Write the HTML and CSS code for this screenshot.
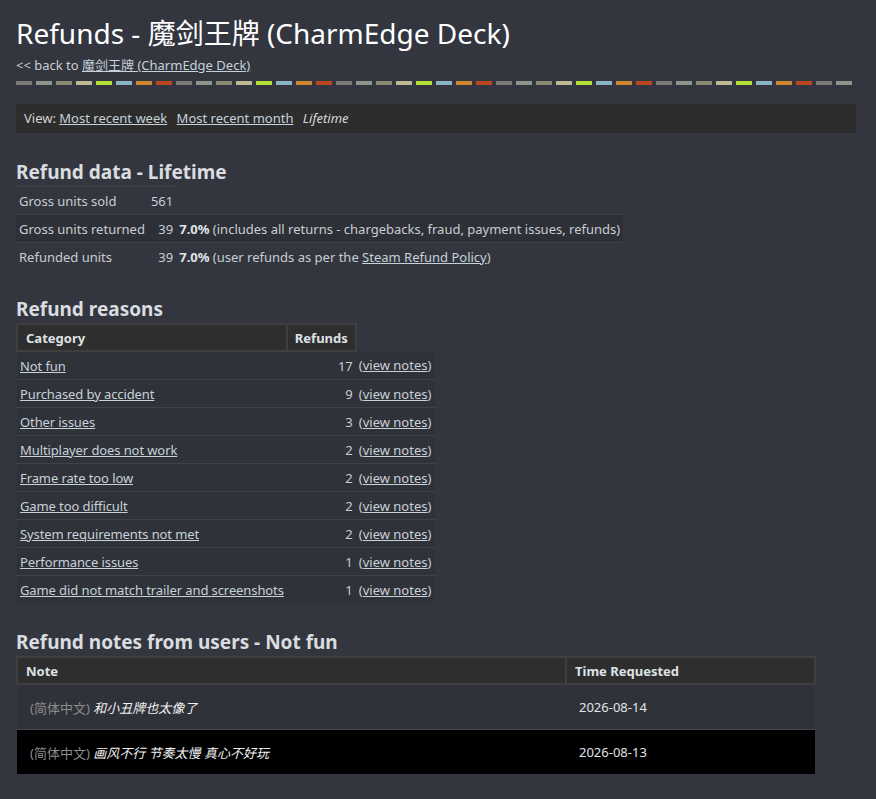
FILE: index.html
```html
<!DOCTYPE html>
<html lang="en">
<head>
    <meta charset="UTF-8">
    <title>Refunds - 魔剑王牌 (CharmEdge Deck)</title>
    <link rel="stylesheet" href="styles.css">
</head>
<body>
    <h1 class="page-title">Refunds - 魔剑王牌 (CharmEdge Deck)</h1>
    <div class="back-link">&lt;&lt; back to <a href="#">魔剑王牌 (CharmEdge Deck)</a></div>
    <div class="dash-rule"></div>

    <div class="view-bar">
        View: <a href="#">Most recent week</a>
        <a href="#">Most recent month</a>
        <em>Lifetime</em>
    </div>

    <h2>Refund data - Lifetime</h2>
    <table class="refund-data">
        <tr>
            <td>Gross units sold</td>
            <td class="num">561</td>
        </tr>
        <tr>
            <td>Gross units returned</td>
            <td class="num">39</td>
            <td><b>7.0%</b> (includes all returns - chargebacks, fraud, payment issues, refunds)</td>
        </tr>
        <tr>
            <td>Refunded units</td>
            <td class="num">39</td>
            <td><b>7.0%</b> (user refunds as per the <a href="#">Steam Refund Policy</a>)</td>
        </tr>
    </table>

    <h2>Refund reasons</h2>
    <table class="reasons">
        <thead>
            <tr>
                <th class="cat-col">Category</th>
                <th>Refunds</th>
            </tr>
        </thead>
        <tbody>
            <tr><td><a href="#">Not fun</a></td><td class="num">17</td><td>(<a href="#">view notes</a>)</td></tr>
            <tr><td><a href="#">Purchased by accident</a></td><td class="num">9</td><td>(<a href="#">view notes</a>)</td></tr>
            <tr><td><a href="#">Other issues</a></td><td class="num">3</td><td>(<a href="#">view notes</a>)</td></tr>
            <tr><td><a href="#">Multiplayer does not work</a></td><td class="num">2</td><td>(<a href="#">view notes</a>)</td></tr>
            <tr><td><a href="#">Frame rate too low</a></td><td class="num">2</td><td>(<a href="#">view notes</a>)</td></tr>
            <tr><td><a href="#">Game too difficult</a></td><td class="num">2</td><td>(<a href="#">view notes</a>)</td></tr>
            <tr><td><a href="#">System requirements not met</a></td><td class="num">2</td><td>(<a href="#">view notes</a>)</td></tr>
            <tr><td><a href="#">Performance issues</a></td><td class="num">1</td><td>(<a href="#">view notes</a>)</td></tr>
            <tr><td><a href="#">Game did not match trailer and screenshots</a></td><td class="num">1</td><td>(<a href="#">view notes</a>)</td></tr>
        </tbody>
    </table>

    <h2>Refund notes from users - Not fun</h2>
    <table class="notes">
        <thead>
            <tr>
                <th class="note-col">Note</th>
                <th>Time Requested</th>
            </tr>
        </thead>
        <tbody>
            <tr>
                <td><span class="lang">(简体中文)</span> <i>和小丑牌也太像了</i></td>
                <td>2026-08-14</td>
            </tr>
            <tr class="dark">
                <td><span class="lang">(简体中文)</span> <i>画风不行 节奏太慢 真心不好玩</i></td>
                <td>2026-08-13</td>
            </tr>
        </tbody>
    </table>
</body>
</html>
```

FILE: styles.css
```css
body {
    margin: 0;
    padding: 14px 20px 20px 16px;
    background-color: #33363f;
    color: #c9cdd1;
    font-family: "Noto Sans", "Noto Sans CJK SC", sans-serif;
    font-size: 13px;
}
a {
    color: #c6d1d9;
    text-decoration: underline;
}
.page-title {
    margin: 0;
    font-size: 28px;
    font-weight: normal;
    line-height: 38px;
    color: #ffffff;
}
.back-link {
    margin-top: 3px;
    line-height: 20px;
}
/* 8-colour dashed strip under the header */
.dash-rule {
    width: 836px;
    height: 4px;
    margin-top: 6px;
    background: repeating-linear-gradient(90deg,
        #7b7b7b 0 16px, transparent 16px 20px,
        #8c978c 20px 36px, transparent 36px 40px,
        #8c8a6e 40px 56px, transparent 56px 60px,
        #bcb898 60px 76px, transparent 76px 80px,
        #b5e03a 80px 96px, transparent 96px 100px,
        #8ab4c4 100px 116px, transparent 116px 120px,
        #c8882e 120px 136px, transparent 136px 140px,
        #b8461e 140px 156px, transparent 156px 160px);
}
.view-bar {
    margin-top: 19px;
    padding: 0 8px;
    height: 29px;
    line-height: 29px;
    background-color: #2d2d2e;
    color: #d4d4d4;
}
.view-bar a {
    margin-right: 6px;
}
.view-bar em {
    color: #d8d8d8;
}
h2 {
    margin: 26px 0 1px;
    font-size: 19px;
    line-height: 26px;
    font-weight: bold;
    color: #dadde0;
}
table {
    border-collapse: collapse;
}
td {
    padding: 0 3px;
    height: 27px;
    border-top: 1px solid #3f4249;
    white-space: nowrap;
}
.num {
    text-align: right;
}
b {
    color: #e0e3e6;
}
.refund-data tr:nth-child(2) td {
    background-color: #2d3037;
}
th {
    text-align: left;
    font-weight: bold;
    height: 25px;
    padding: 0 8px;
    background-color: #2e2e2f;
    border: 2px solid #3e3f41;
    color: #dfe2e5;
}
.cat-col {
    width: 249px;
}
.reasons th:last-child {
    padding: 0 7px;
}
.reasons td {
    background-color: #30323a;
}
.reasons tbody tr:first-child td {
    border-top: none;
}
.reasons td:first-child {
    letter-spacing: -0.1px;
}
.reasons td:last-child {
    padding-right: 4px;
}
.note-col {
    width: 531px;
}
.notes th:last-child {
    width: 231px;
}
.notes td {
    height: 44px;
    padding: 0 13px;
    background-color: #30323a;
    border-top: none;
    color: #e1e4e6;
}
.notes tr.dark td {
    background-color: #000000;
    border-top: 1px solid #46484d;
}
.lang {
    color: #8c8c8c;
}
.notes i {
    color: #f0f0f0;
}
```
